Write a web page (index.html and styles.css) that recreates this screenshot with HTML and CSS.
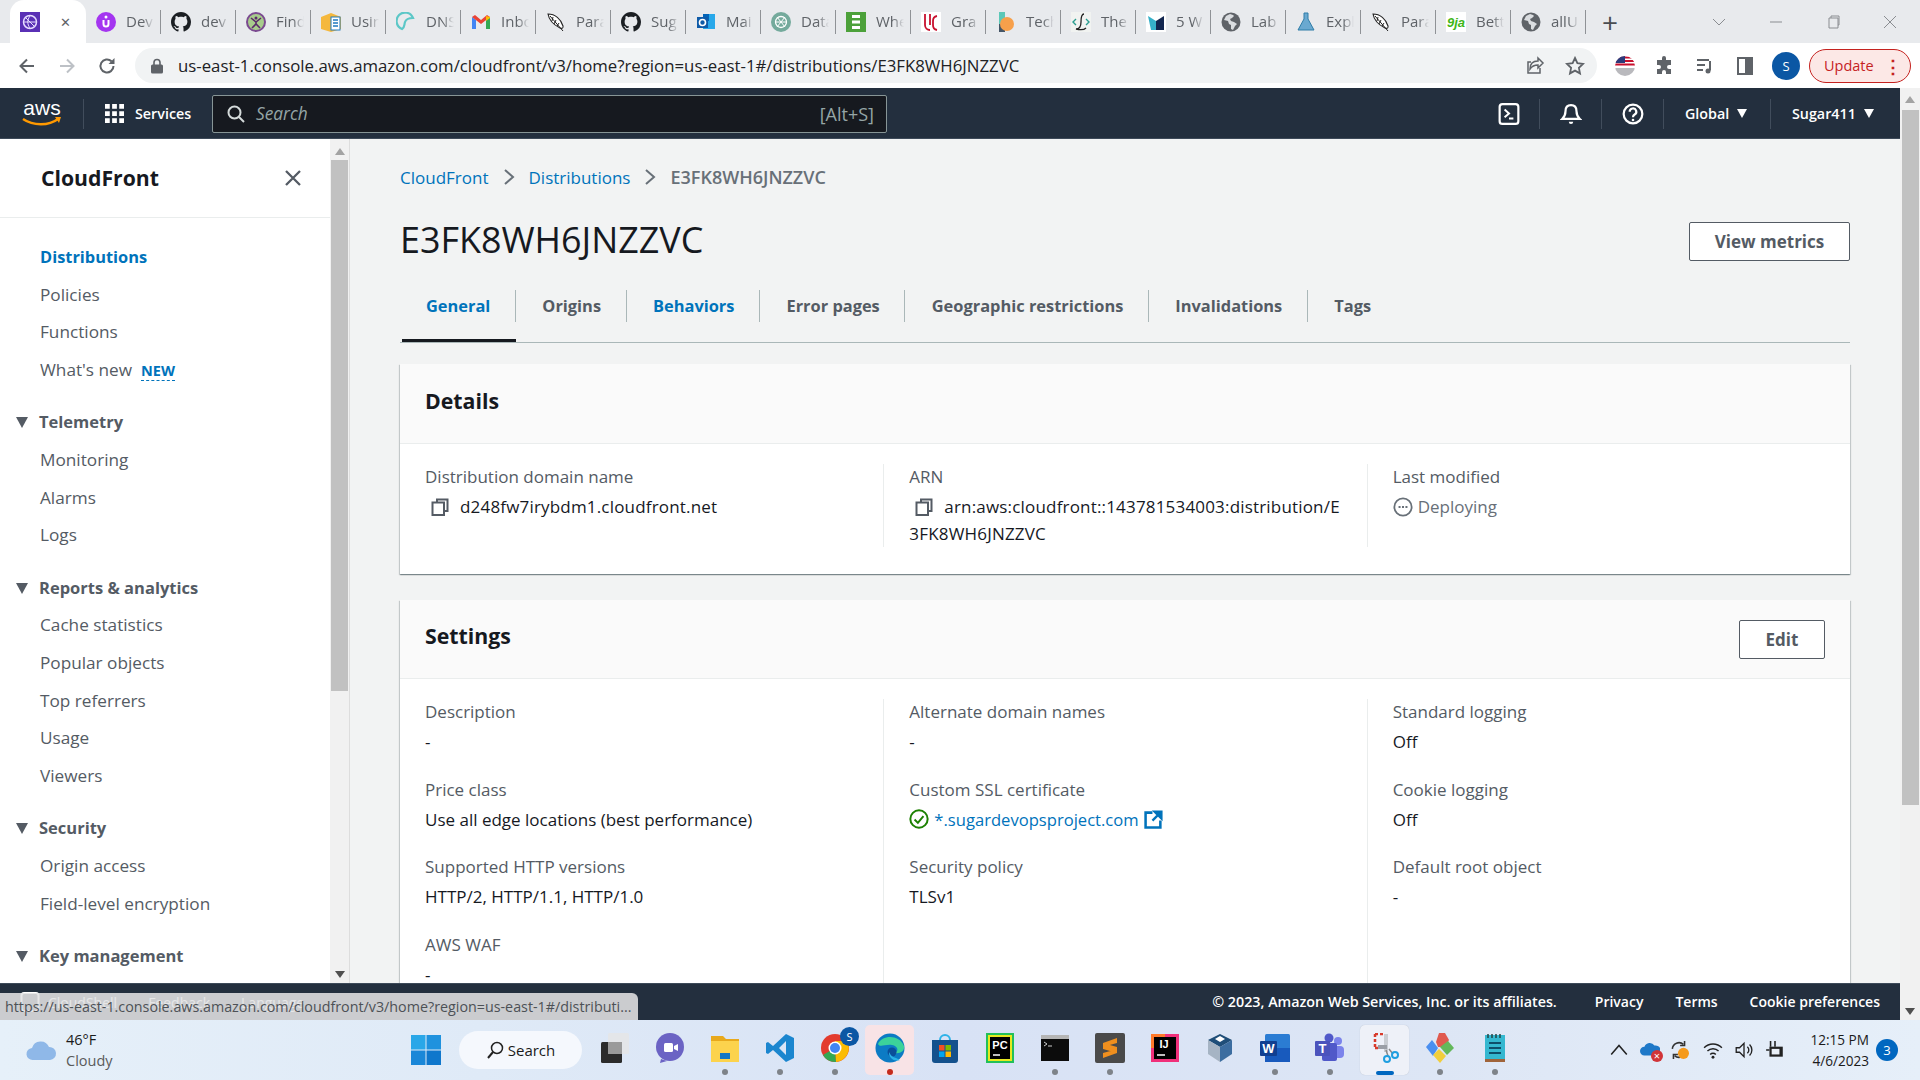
FILE: index.html
```html
<!DOCTYPE html>
<html lang="en">
<head>
<meta charset="utf-8">
<title>CloudFront</title>
<link rel="stylesheet" href="styles.css">
</head>
<body>
<svg class="defs" width="0" height="0" aria-hidden="true">
  <symbol id="gh" viewBox="0 0 16 16"><path fill="#1b1f23" d="M8 0C3.6 0 0 3.6 0 8c0 3.5 2.3 6.5 5.5 7.6.4.1.5-.2.5-.4v-1.4c-2.2.5-2.7-1-2.7-1-.4-.9-.9-1.200-.9-1.200-.7-.5.1-.5.1-.5.8.1 1.200.8 1.200.8.7 1.200 1.900.9 2.300.7.1-.5.3-.9.5-1.100-1.800-.2-3.600-.9-3.600-4 0-.9.3-1.600.8-2.100-.1-.2-.4-1 .1-2.100 0 0 .7-.2 2.200.8.6-.2 1.300-.3 2-.3s1.400.1 2 .3c1.500-1 2.200-.8 2.200-.8.4 1.100.2 1.900.1 2.100.5.6.8 1.300.8 2.100 0 3.100-1.900 3.700-3.700 3.900.3.3.6.8.6 1.500v2.200c0 .2.1.5.6.4A8 8 0 0 0 16 8c0-4.400-3.600-8-8-8z"/></symbol>
  <symbol id="globe" viewBox="0 0 20 20"><circle cx="10" cy="10" r="9.500" fill="#5f6368"/><path fill="#e8eaed" d="M9 2 5 4 3 8l4 1 1 3 2 1v4l2 1 2-4 2-2-3-2-3-1-1-2 2-1 2-2-1-1z" opacity=".9"/></symbol>
  <symbol id="feather" viewBox="0 0 20 20"><path fill="#fff" stroke="#222" stroke-width="1.100" d="M2 2c7 0 13 5 15 12 .500 2-1 3-3 2C8 13 3 8 2 2z"/><path stroke="#222" stroke-width="1" d="M4 4l13 15M7 5l-1 4M10 8l-2 4M13 11l-2 3"/></symbol>
</svg>

<div class="tabstrip">
  <div class="tab tab-active">
    <svg class="fav" viewBox="0 0 20 20"><rect width="20" height="20" fill="#5a30b5"/><circle cx="10" cy="10" r="6.500" fill="none" stroke="#e6dcff" stroke-width="1.500"/><path d="M4 10h12M10 4c-3 4-3 8 0 12M6 6l8 8" stroke="#e6dcff" fill="none"/></svg>
    <span class="tab-close">✕</span>
  </div>
  <div class="tab"><svg class="fav" viewBox="0 0 20 20"><circle cx="10" cy="10" r="10" fill="#a435f0"/><path d="M6.500 8v4a3.500 3.500 0 0 0 7 0V8h-2v4a1.500 1.500 0 0 1-3 0V8z" fill="#fff"/><circle cx="10" cy="5" r="1.500" fill="#fff"/></svg><span class="tab-text">Dev</span></div>
  <div class="tab"><svg class="fav"><use href="#gh"/></svg><span class="tab-text">dev</span></div>
  <div class="tab"><svg class="fav" viewBox="0 0 20 20"><circle cx="10" cy="10" r="9" fill="#a8cc8c" stroke="#7b4a90" stroke-width="2"/><path d="M5 6l5 4 5-4M10 10v2M6 16l4-4 4 4" stroke="#5b2a6b" stroke-width="1.600" fill="none"/><circle cx="10" cy="6" r="1.500" fill="#5b2a6b"/></svg><span class="tab-text">Find</span></div>
  <div class="tab"><svg class="fav" viewBox="0 0 20 20"><path fill="#f5b83d" d="M0 5l10-4 10 4v12l-10 3L0 17z"/><rect x="10" y="5" width="9" height="13" fill="#fff" stroke="#1f7ac0"/><path d="M12 8h5M12 11h5M12 14h5" stroke="#1f7ac0" stroke-width="1.300"/></svg><span class="tab-text">Usin</span></div>
  <div class="tab"><svg class="fav" viewBox="0 0 20 20"><path fill="none" stroke="#5cc7c7" stroke-width="2.200" d="M6 17A8.500 8.500 0 1 1 17 6c-4 0-7 1-8 4s0 5-3 7z"/></svg><span class="tab-text">DNS</span></div>
  <div class="tab"><svg class="fav" viewBox="0 0 20 20"><path fill="#4285f4" d="M1 5v12h4V8z"/><path fill="#34a853" d="M15 8v9h4V5z"/><path fill="#ea4335" d="M1 5l9 7 9-7-3-2-6 5-6-5z"/><path fill="#fbbc04" d="M15 4l4 1v1l-4 3z"/></svg><span class="tab-text">Inbo</span></div>
  <div class="tab"><svg class="fav"><use href="#feather"/></svg><span class="tab-text">Para</span></div>
  <div class="tab"><svg class="fav"><use href="#gh"/></svg><span class="tab-text">Sug</span></div>
  <div class="tab"><svg class="fav" viewBox="0 0 20 20"><rect x="7" y="2" width="12" height="15" fill="#28a8ea"/><rect x="7" y="2" width="6" height="7" fill="#0364b8"/><rect x="1" y="5" width="11" height="11" fill="#0f5ba8"/><circle cx="6.500" cy="10.500" r="3" fill="none" stroke="#fff" stroke-width="1.600"/></svg><span class="tab-text">Mai</span></div>
  <div class="tab"><svg class="fav" viewBox="0 0 20 20"><circle cx="10" cy="10" r="10" fill="#74aa9c"/><circle cx="10" cy="10" r="5.500" fill="none" stroke="#fff" stroke-width="1.300"/><path d="M6 5l8 10M14 5L6 15M4.500 10h11" stroke="#fff"/></svg><span class="tab-text">Data</span></div>
  <div class="tab"><svg class="fav" viewBox="0 0 20 20"><rect width="20" height="20" fill="#4ca13a"/><path d="M6 3h8v3H6zM6 8.500h8v3H6zM6 14h8v3H6z" fill="#fff"/></svg><span class="tab-text">Whe</span></div>
  <div class="tab"><svg class="fav" viewBox="0 0 20 20"><rect width="20" height="20" fill="#fff"/><path d="M4 2v11a5 5 0 0 0 5 5M9 2v11M16 4a5 5 0 0 0-4 5v4a5 5 0 0 0 4 5" stroke="#c8102e" stroke-width="1.800" fill="none"/></svg><span class="tab-text">Gra</span></div>
  <div class="tab"><svg class="fav" viewBox="0 0 20 20"><rect x="3" width="6" height="20" fill="#5cc8b8"/><rect x="3" y="12" width="6" height="8" fill="#456"/><circle cx="11" cy="12" r="7" fill="#f7a04b"/></svg><span class="tab-text">Tech</span></div>
  <div class="tab"><svg class="fav" viewBox="0 0 20 20"><rect width="20" height="20" fill="#f1f3f1"/><path d="M13 2c-3 0-3 5-3 8s-1 7-5 7c4 1 8 1 10-1" stroke="#222" stroke-width="1.300" fill="none"/><path d="M5 7l-3 3 3 3M15 7l3 3-3 3" stroke="#2a9d8f" stroke-width="1.400" fill="none"/></svg><span class="tab-text">The</span></div>
  <div class="tab"><svg class="fav" viewBox="0 0 20 20"><rect width="20" height="20" fill="#fff"/><path fill="#35b0c8" d="M2 4l8 5v9H5z"/><path fill="#12264f" d="M18 4l-8 5v9h8z"/></svg><span class="tab-text">5 W</span></div>
  <div class="tab"><svg class="fav"><use href="#globe"/></svg><span class="tab-text">Lab</span></div>
  <div class="tab"><svg class="fav" viewBox="0 0 20 20"><path fill="#6aa9d0" stroke="#2e7da8" d="M8 1h4v6l6 11H2L8 7z"/></svg><span class="tab-text">Expl</span></div>
  <div class="tab"><svg class="fav"><use href="#feather"/></svg><span class="tab-text">Para</span></div>
  <div class="tab"><svg class="fav" viewBox="0 0 20 20"><rect width="20" height="20" fill="#fff"/><text x="10" y="15" text-anchor="middle" class="fav-9ja">9ja</text></svg><span class="tab-text">Bett</span></div>
  <div class="tab"><svg class="fav"><use href="#globe"/></svg><span class="tab-text">allU</span></div>
  <span class="newtab">+</span>
  <div class="win-ctrls">
    <svg class="win" viewBox="0 0 14 14"><path d="M1 4l6 6 6-6" fill="none" stroke="#8a8d91"/></svg>
    <svg class="win" viewBox="0 0 14 14"><path d="M1 7h12" stroke="#8a8d91"/></svg>
    <svg class="win" viewBox="0 0 14 14"><path d="M3 3h9v10H3z M5 3V1h8v9h-1" fill="none" stroke="#8a8d91"/></svg>
    <svg class="win" viewBox="0 0 14 14"><path d="M1 1l12 12M13 1L1 13" stroke="#8a8d91"/></svg>
  </div>
</div>

<div class="toolbar">
  <div class="nav-btns">
    <svg class="tb-icon" viewBox="0 0 20 20"><path d="M17 10H4M10 3.500 3.500 10l6.500 6.500" fill="none" stroke="#5f6368" stroke-width="2"/></svg>
    <svg class="tb-icon" viewBox="0 0 20 20"><path d="M3 10h13M10 3.500l6.500 6.500-6.500 6.500" fill="none" stroke="#bdc1c6" stroke-width="2"/></svg>
    <svg class="tb-icon" viewBox="0 0 20 20"><path d="M16.500 10a6.500 6.500 0 1 1-2-4.700" fill="none" stroke="#5f6368" stroke-width="2"/><path d="M17.500 2v6h-6z" fill="#5f6368"/></svg>
  </div>
  <div class="omnibox">
    <svg class="lock" viewBox="0 0 12 16"><path d="M3 7V4.500a3 3 0 0 1 6 0V7" fill="none" stroke="#5f6368" stroke-width="1.600"/><rect y="6.500" width="12" height="9" rx="1.500" fill="#5f6368"/></svg>
    <span class="url">us-east-1.console.aws.amazon.com/cloudfront/v3/home?region=us-east-1#/distributions/E3FK8WH6JNZZVC</span>
    <svg class="omni-icon" viewBox="0 0 20 20"><path d="M13 2l5 5-5 5V9c-4 0-6 1-8 4 0-5 3-8 8-8z M15 12v5H3V6h3" fill="none" stroke="#5f6368" stroke-width="1.500"/></svg>
    <svg class="omni-icon" viewBox="0 0 20 20"><path d="M10 2l2.400 5.200 5.600.700-4.100 3.900 1.100 5.600L10 14.600l-5 2.800 1.100-5.600L2 7.900l5.600-.7z" fill="none" stroke="#5f6368" stroke-width="1.800"/></svg>
  </div>
  <div class="tb-right">
    <svg class="ext" viewBox="0 0 20 20"><clipPath id="flagc"><circle cx="10" cy="10" r="10"/></clipPath><g clip-path="url(#flagc)"><rect width="20" height="20" fill="#fff"/><path d="M0 1.500h20M0 5h20M0 8.500h20" stroke="#c8102e" stroke-width="1.800"/><rect width="10" height="7" fill="#2b3a7a"/><rect y="12" width="20" height="8" fill="#b9b9bd"/></g></svg>
    <svg class="ext" viewBox="0 0 20 20"><path fill="#5f6368" d="M7 2a2 2 0 0 1 4 0v2h5v5h-2a2 2 0 0 0 0 4h2v5h-5v-2a2 2 0 0 0-4 0v2H2v-5h2a2 2 0 0 0 0-4H2V4h5z"/></svg>
    <svg class="ext" viewBox="0 0 20 20"><path d="M2 4h12M2 9h8M2 14h6" stroke="#5f6368" stroke-width="2"/><path d="M15 5v9.500" stroke="#5f6368" stroke-width="2"/><circle cx="13" cy="15" r="2.500" fill="#5f6368"/></svg>
    <svg class="ext" viewBox="0 0 20 20"><rect x="3" y="2" width="14" height="16" fill="none" stroke="#5f6368" stroke-width="2"/><rect x="10" y="2" width="7" height="16" fill="#5f6368"/></svg>
    <span class="avatar">S</span>
    <span class="update">Update<span class="update-dots">⋮</span></span>
  </div>
</div>

<div class="window">
  <div class="console">
    <header class="awsnav">
      <svg class="aws-logo" viewBox="0 0 40 30"><text x="20" y="16" text-anchor="middle" class="aws-text">aws</text><path d="M1 20c10 7 26 7 35 0" fill="none" stroke="#f90" stroke-width="2.300"/><path d="M33 18l6 0-2 6z" fill="#f90"/></svg>
      <span class="awsnav-sep sep-logo"></span>
      <svg class="grid-ic" viewBox="0 0 20 20"><path fill="#fff" d="M0 0h5v5H0zM7.500 0h5v5h-5zM15 0h5v5h-5zM0 7.500h5v5H0zM7.500 7.500h5v5h-5zM15 7.500h5v5h-5zM0 15h5v5H0zM7.500 15h5v5h-5zM15 15h5v5h-5z"/></svg>
      <span class="services">Services</span>
      <div class="searchbox">
        <svg class="search-ic" viewBox="0 0 18 18"><circle cx="7.500" cy="7.500" r="6" fill="none" stroke="#d5dbdb" stroke-width="2"/><path d="M12 12l5 5" stroke="#d5dbdb" stroke-width="2"/></svg>
        <span class="search-ph">Search</span>
        <span class="search-key">[Alt+S]</span>
      </div>
      <div class="nav-right">
        <div class="nav-item"><svg class="nav-ic" viewBox="0 0 20 20"><rect x="1.500" y="1" width="17" height="18" rx="2.500" fill="none" stroke="#fff" stroke-width="2"/><path d="M6 6l4 3.500L6 13M10 14h4" fill="none" stroke="#fff" stroke-width="1.800"/></svg></div>
        <div class="nav-item"><svg class="nav-ic" viewBox="0 0 20 20"><path d="M10 2c-3.500 0-5 2.500-5 5.500 0 4-1.500 5.500-3 7h16c-1.500-1.500-3-3-3-7C15 4.500 13.500 2 10 2z" fill="none" stroke="#fff" stroke-width="2"/><path d="M8 17a2 2 0 0 0 4 0z" fill="#fff"/></svg></div>
        <div class="nav-item"><svg class="nav-ic" viewBox="0 0 20 20"><circle cx="10" cy="10" r="8.500" fill="none" stroke="#fff" stroke-width="2"/><path d="M7 8a3 3 0 1 1 4.500 2.500c-1 .6-1.500 1-1.500 2.500" fill="none" stroke="#fff" stroke-width="2"/><circle cx="10" cy="15.500" r="1.200" fill="#fff"/></svg></div>
        <div class="nav-item nav-menu nav-global">Global<span class="tri"></span></div>
        <div class="nav-item nav-menu nav-user">Sugar411<span class="tri"></span></div>
      </div>
    </header>

    <div class="console-body">
      <aside class="sidenav">
        <div class="side-head"><span class="side-title">CloudFront</span>
          <svg class="side-close" viewBox="0 0 18 18"><path d="M2 2l14 14M16 2L2 16" stroke="#545b64" stroke-width="2.300"/></svg>
        </div>
        <nav class="side-list">
          <a class="side-link side-current">Distributions</a>
          <a class="side-link">Policies</a>
          <a class="side-link">Functions</a>
          <a class="side-link">What's new<span class="new-tag">NEW</span></a>
          <div class="side-group">Telemetry</div>
          <a class="side-link">Monitoring</a>
          <a class="side-link">Alarms</a>
          <a class="side-link">Logs</a>
          <div class="side-group">Reports &amp; analytics</div>
          <a class="side-link">Cache statistics</a>
          <a class="side-link">Popular objects</a>
          <a class="side-link">Top referrers</a>
          <a class="side-link">Usage</a>
          <a class="side-link">Viewers</a>
          <div class="side-group">Security</div>
          <a class="side-link">Origin access</a>
          <a class="side-link">Field-level encryption</a>
          <div class="side-group">Key management</div>
        </nav>
      </aside>
      <div class="side-scroll">
        <span class="sb-arrow sb-up"></span>
        <span class="side-thumb"></span>
        <span class="sb-arrow sb-down sb-end"></span>
      </div>

      <main class="content">
        <div class="crumbs">
          <a class="link">CloudFront</a>
          <svg class="crumb-sep" viewBox="0 0 12 18"><path d="M2 2l8 7-8 7" fill="none" stroke="#687078" stroke-width="2"/></svg>
          <a class="link">Distributions</a>
          <svg class="crumb-sep" viewBox="0 0 12 18"><path d="M2 2l8 7-8 7" fill="none" stroke="#687078" stroke-width="2"/></svg>
          <span class="crumb-current">E3FK8WH6JNZZVC</span>
        </div>
        <div class="title-row">
          <h1 class="page-title">E3FK8WH6JNZZVC</h1>
          <button class="btn btn-metrics">View metrics</button>
        </div>
        <div class="tabs">
          <span class="ctab ctab-active">General</span>
          <span class="ctab">Origins</span>
          <span class="ctab ctab-blue">Behaviors</span>
          <span class="ctab">Error pages</span>
          <span class="ctab">Geographic restrictions</span>
          <span class="ctab">Invalidations</span>
          <span class="ctab ctab-last">Tags</span>
        </div>

        <section class="card">
          <div class="card-head"><h2 class="card-title">Details</h2></div>
          <div class="card-body card-body-details">
            <div class="col">
              <div class="kv"><div class="k">Distribution domain name</div>
                <div class="v v-copy"><svg class="copy" viewBox="0 0 18 18"><path d="M6 4V1.500h10.500V13H14M1.500 4.500H13V17H1.500z" fill="none" stroke="#545b64" stroke-width="2"/></svg>d248fw7irybdm1.cloudfront.net</div></div>
            </div>
            <div class="col">
              <div class="kv"><div class="k">ARN</div>
                <div class="v v-copy v-arn"><svg class="copy" viewBox="0 0 18 18"><path d="M6 4V1.500h10.500V13H14M1.500 4.500H13V17H1.500z" fill="none" stroke="#545b64" stroke-width="2"/></svg><span class="arn-a">arn:aws:cloudfront::143781534003:distribution/E</span><wbr><span class="arn-b">3FK8WH6JNZZVC</span></div></div>
            </div>
            <div class="col">
              <div class="kv"><div class="k">Last modified</div>
                <div class="v v-status"><svg class="status-ic" viewBox="0 0 18 18"><circle cx="9" cy="9" r="7.800" fill="none" stroke="#687078" stroke-width="1.600"/><path d="M5 9h1.800M8.100 9h1.800M11.200 9H13" stroke="#687078" stroke-width="1.600"/></svg>Deploying</div></div>
            </div>
          </div>
        </section>

        <section class="card card-settings">
          <div class="card-head card-head-row"><h2 class="card-title">Settings</h2><button class="btn btn-edit">Edit</button></div>
          <div class="card-body card-body-settings">
            <div class="col">
              <div class="kv"><div class="k">Description</div><div class="v">-</div></div>
              <div class="kv"><div class="k">Price class</div><div class="v">Use all edge locations (best performance)</div></div>
              <div class="kv"><div class="k">Supported HTTP versions</div><div class="v">HTTP/2, HTTP/1.1, HTTP/1.0</div></div>
              <div class="kv"><div class="k">AWS WAF</div><div class="v">-</div></div>
            </div>
            <div class="col">
              <div class="kv"><div class="k">Alternate domain names</div><div class="v">-</div></div>
              <div class="kv"><div class="k">Custom SSL certificate</div>
                <div class="v v-ssl"><svg class="ok-ic" viewBox="0 0 18 18"><circle cx="9" cy="9" r="7.800" fill="none" stroke="#1d8102" stroke-width="1.800"/><path d="M5 9.500l3 3 5-6" fill="none" stroke="#1d8102" stroke-width="1.800"/></svg><a class="link ssl-link">*.sugardevopsproject.com</a><svg class="ext-ic" viewBox="0 0 18 18"><path d="M8 2.500H1.500v14h14V10" fill="none" stroke="#0073bb" stroke-width="2.400"/><path d="M10 1.500h6.500V8zM15 3L8 10" fill="#0073bb" stroke="#0073bb" stroke-width="2.200"/></svg></div></div>
              <div class="kv"><div class="k">Security policy</div><div class="v">TLSv1</div></div>
            </div>
            <div class="col">
              <div class="kv"><div class="k">Standard logging</div><div class="v">Off</div></div>
              <div class="kv"><div class="k">Cookie logging</div><div class="v">Off</div></div>
              <div class="kv"><div class="k">Default root object</div><div class="v">-</div></div>
            </div>
          </div>
        </section>
      </main>
    </div>

    <footer class="awsfoot">
      <div class="foot-left"><svg class="foot-ic" viewBox="0 0 20 20"><rect x="1.500" y="1" width="17" height="18" rx="2.500" fill="none" stroke="#fff" stroke-width="2"/></svg><span>CloudShell</span><span>Feedback</span><span>Language</span></div>
      <div class="foot-right"><span class="foot-copy">© 2023, Amazon Web Services, Inc. or its affiliates.</span><span>Privacy</span><span>Terms</span><span>Cookie preferences</span></div>
    </footer>
  </div>
  <div class="page-scroll">
    <span class="sb-arrow sb-up"></span>
    <span class="page-thumb"></span>
    <span class="sb-arrow sb-down sb-end"></span>
  </div>
  <div class="status-bubble">https://us-east-1.console.aws.amazon.com/cloudfront/v3/home?region=us-east-1#/distributi...</div>
</div>

<div class="taskbar">
  <div class="weather">
    <svg class="weather-ic" viewBox="0 0 32 24"><path d="M8 22a6 6 0 0 1-1-12 9 9 0 0 1 17-1 6.500 6.500 0 0 1 1 13z" fill="#8fb8e8"/></svg>
    <div class="weather-text"><span>46°F</span><span class="weather-sub">Cloudy</span></div>
  </div>
  <div class="win-logo"><svg class="tk" viewBox="0 0 30 30"><path fill="#29a7e8" d="M0 0h14.500v14.500H0z"/><path fill="#1f92de" d="M15.500 0H30v14.500H15.500z"/><path fill="#1a87d8" d="M0 15.500h14.500V30H0z"/><path fill="#0f77cc" d="M15.500 15.500H30V30H15.500z"/></svg></div>
  <div class="tk-search"><svg class="tk-search-ic" viewBox="0 0 18 18"><circle cx="11" cy="7" r="5.500" fill="none" stroke="#222" stroke-width="1.500"/><path d="M7 11l-5 6" stroke="#222" stroke-width="2"/></svg>Search</div>
  <div class="tk-apps">
    <div class="tk-slot"><svg class="tk" viewBox="0 0 30 30"><rect x="1" y="9" width="21" height="21" rx="1.500" fill="#2b2b2b"/><rect x="8" y="0" width="21" height="21" rx="1.500" fill="#e4e6e8" opacity=".95"/><rect x="8" y="9" width="14" height="12" fill="#9a9a9a"/></svg></div>
    <div class="tk-slot"><svg class="tk" viewBox="0 0 30 30"><circle cx="15" cy="14" r="14" fill="#6b63c4"/><path d="M6 26l-1 4 7-2z" fill="#6b63c4"/><rect x="9" y="10" width="9" height="9" rx="1.500" fill="#fff"/><path d="M19 13l4-2v7l-4-2z" fill="#fff"/></svg></div>
    <div class="tk-slot tk-on"><svg class="tk" viewBox="0 0 30 30"><path d="M1 3h12l3 3h13v22H1z" fill="#e8a91c"/><rect x="1" y="8" width="28" height="21" fill="#fcd34d"/><rect x="10" y="20" width="10" height="6" fill="#1277c4"/></svg></div>
    <div class="tk-slot tk-on"><svg class="tk" viewBox="0 0 30 30"><path d="M21 1l8 4v20l-8 4-13-12-5 4-2-1V10l2-1 5 4zM21 8l-7 7 7 7z" fill="#1b86cf" fill-rule="evenodd"/></svg></div>
    <div class="tk-slot tk-on"><svg class="tk" viewBox="0 0 30 30"><circle cx="15" cy="15" r="14" fill="#e33b2e"/><path d="M15 15L3 22a14 14 0 0 0 13 7z" fill="#34a853"/><path d="M15 8h12a14 14 0 0 1-11 21z" fill="#fbbc04"/><circle cx="15" cy="15" r="6.500" fill="#fff"/><circle cx="15" cy="15" r="5" fill="#4285f4"/></svg><span class="chrome-badge">S</span></div>
    <div class="tk-slot tk-on tk-active-edge"><svg class="tk" viewBox="0 0 30 30"><circle cx="15" cy="15" r="14.500" fill="#0c7bc4"/><path d="M3 11C7 2 24 1 29 13c1 5-4 8-9 7 4-2 3-7-3-8C10 11 5 15 3 11z" fill="#3cd29a"/><circle cx="17" cy="19" r="4.500" fill="#0a4f9a"/><path d="M21 25a10 10 0 0 1-7-6c-.5 6 5 10 11 8z" fill="#29b3e8"/></svg></div>
    <div class="tk-slot"><svg class="tk" viewBox="0 0 30 30"><path d="M10 7a5 5 0 0 1 10 0" fill="none" stroke="#2eb3e8" stroke-width="2"/><path d="M2 7h26v20a3 3 0 0 1-3 3H5a3 3 0 0 1-3-3z" fill="#14518d"/><path fill="#f25022" d="M9 12h5.500v5.500H9z"/><path fill="#7fba00" d="M15.500 12H21v5.500h-5.500z"/><path fill="#00a4ef" d="M9 18.500h5.500V24H9z"/><path fill="#ffb900" d="M15.500 18.500H21V24h-5.500z"/></svg></div>
    <div class="tk-slot"><svg class="tk" viewBox="0 0 30 30"><rect x="2" y="1" width="26" height="28" fill="#e8e820" stroke="#22c05a" stroke-width="2"/><rect x="5" y="4" width="20" height="22" fill="#000"/><text x="15" y="16" text-anchor="middle" class="tk-txt">PC</text><path d="M8 22h7" stroke="#fff" stroke-width="1.500"/></svg></div>
    <div class="tk-slot tk-on"><svg class="tk" viewBox="0 0 30 30"><rect x="1" y="2" width="28" height="26" fill="#0c0c0c"/><rect x="1" y="2" width="28" height="4" fill="#b5b5b5"/><path d="M4 9l3 2-3 2M8 13h4" stroke="#ccc" fill="none"/></svg></div>
    <div class="tk-slot tk-on"><svg class="tk" viewBox="0 0 30 30"><rect width="30" height="30" rx="2" fill="#4a4a4a"/><path d="M22 5 8 10v6l14 4v-5l-9-2.500L22 10zM8 25l14-5v-6L8 10v5l9 2.500L8 20z" fill="#f08f1e"/></svg></div>
    <div class="tk-slot"><svg class="tk" viewBox="0 0 30 30"><rect x="1" y="1" width="28" height="28" fill="#f0307a"/><rect x="1" y="1" width="14" height="14" fill="#ff7a2b"/><rect x="4" y="4" width="22" height="22" fill="#000"/><text x="14" y="15" text-anchor="middle" class="tk-txt">IJ</text><path d="M7 22h8" stroke="#fff" stroke-width="1.500"/></svg></div>
    <div class="tk-slot"><svg class="tk" viewBox="0 0 30 30"><path d="M15 1l12 6v14l-12 8-12-8V7z" fill="#d8dee8"/><path d="M15 1l12 6-12 7L3 7z" fill="#1f4e79"/><path d="M3 7l12 7v15L3 21z" fill="#a6b4c4"/><path d="M15 14l12-7v14l-12 8z" fill="#3c6da0"/><path d="M10 6l5 3 5-3-5-3z" fill="#fff"/></svg></div>
    <div class="tk-slot tk-on"><svg class="tk" viewBox="0 0 30 30"><rect x="5" y="1" width="25" height="28" rx="1.500" fill="#2b7cd3"/><rect x="5" y="15" width="25" height="14" fill="#185abd"/><rect y="8" width="17" height="15" rx="1" fill="#103f91"/><text x="8.500" y="20" text-anchor="middle" class="tk-txt tk-txt-w">W</text></svg></div>
    <div class="tk-slot tk-on"><svg class="tk" viewBox="0 0 30 30"><circle cx="23" cy="8" r="4" fill="#7b83eb"/><circle cx="14" cy="5" r="4.500" fill="#5059c9"/><rect x="18" y="13" width="11" height="12" rx="4" fill="#7b83eb"/><rect x="7" y="10" width="15" height="18" rx="2" fill="#5059c9"/><rect y="8" width="15" height="15" rx="1" fill="#4b53bc"/><text x="7.500" y="20" text-anchor="middle" class="tk-txt tk-txt-w">T</text></svg></div>
    <div class="tk-slot tk-on tk-active-snip"><svg class="tk" viewBox="0 0 30 30"><path d="M5 1h10M5 1v14M5 15h3" stroke="#d83b2b" stroke-width="2.500" stroke-dasharray="3 2" fill="none"/><rect x="14" y="1" width="4" height="18" fill="#c9cdd2"/><rect x="8" y="12" width="9" height="4" fill="#9b9fa6"/><path d="M16 17l2 6M19 16l4 5" stroke="#888" stroke-width="1.500"/><circle cx="17" cy="26" r="3" fill="none" stroke="#1f9fe0" stroke-width="2"/><circle cx="25" cy="22" r="3" fill="none" stroke="#1f9fe0" stroke-width="2"/></svg></div>
    <div class="tk-slot tk-on"><svg class="tk" viewBox="0 0 30 30"><path d="M14 0h6l4 7-4 7h-7l-2-5z" fill="#e05a4f"/><path d="M1 14l6-7 6 8-5 8z" fill="#4a8ff0"/><path d="M15 14l8-6 6 7-7 7z" fill="#63b85a"/><path d="M8 22l6-6 7 7-6 7z" fill="#f1ce3c"/></svg></div>
    <div class="tk-slot tk-on"><svg class="tk" viewBox="0 0 30 30"><rect x="5" y="2" width="20" height="26" fill="#35b8d0"/><rect x="5" y="26" width="20" height="3" fill="#a0643a"/><path d="M8 1v4M12 1v4M16 1v4M20 1v4" stroke="#244" stroke-width="1.500"/><path d="M9 10h12M9 15h12M9 20h12" stroke="#0f4f6a" stroke-width="2"/></svg></div>
  </div>
  <div class="tray">
    <svg class="tr" viewBox="0 0 18 18"><path d="M2 13l7-8 7 8" fill="none" stroke="#222" stroke-width="1.400"/></svg>
    <span class="tr-wrap"><svg class="tr tr-drive" viewBox="0 0 18 18"><path d="M4 14a4 4 0 0 1 0-8 5 5 0 0 1 9-1 4 4 0 0 1 2 9z" fill="#1e78c8"/></svg><span class="tr-err">×</span></span>
    <svg class="tr tr-sync" viewBox="0 0 18 18"><path d="M3 8a6 6 0 0 1 10-4M15 10a6 6 0 0 1-10 4" fill="none" stroke="#333" stroke-width="1.400"/><path d="M14 1v4h-4M4 17v-4h4" fill="none" stroke="#333" stroke-width="1.400"/><circle cx="13" cy="12" r="5" fill="#f59a1c"/></svg>
    <svg class="tr" viewBox="0 0 18 18"><path d="M1 7a11 11 0 0 1 16 0M4 10a7 7 0 0 1 10 0M6.500 13a3.500 3.500 0 0 1 5 0" fill="none" stroke="#222" stroke-width="1.300"/><circle cx="9" cy="15.500" r="1.300" fill="#222"/></svg>
    <svg class="tr" viewBox="0 0 18 18"><path d="M2 7h3l4-4v12l-4-4H2z" fill="none" stroke="#222" stroke-width="1.200"/><path d="M12 6a4 4 0 0 1 0 6M14 4a7 7 0 0 1 0 10" fill="none" stroke="#222" stroke-width="1.200"/></svg>
    <svg class="tr" viewBox="0 0 18 18"><rect x="4" y="6" width="12" height="9" fill="#222"/><path d="M5 1v5M9 1v5M1 9h3" stroke="#222" stroke-width="1.400"/><rect x="6" y="8" width="7" height="5" fill="#e8eef6"/></svg>
    <div class="clock"><span>12:15 PM</span><span>4/6/2023</span></div>
    <span class="notif">3</span>
  </div>
</div>
</body>
</html>
```
FILE: styles.css
```css
* { box-sizing: border-box; }
html, body { margin: 0; padding: 0; }
body {
  width: 1920px; height: 1080px; overflow: hidden;
  display: flex; flex-direction: column;
  font-family: "Open Sans", "Liberation Sans", sans-serif;
  background: #fff;
}
.defs { position: absolute; }
h1, h2 { margin: 0; font-weight: 400; }
button { font-family: inherit; }

/* tab strip */
.tabstrip { height: 43px; background: #e8eaed; display: flex; align-items: center; padding-left: 10px; flex: none; }
.tab { width: 75px; height: 43px; display: flex; align-items: center; padding-left: 10px; position: relative; flex: none; overflow: hidden; }
.tab::after { content: ""; position: absolute; right: 0; top: 10px; height: 24px; width: 1px; background: #8f9296; }
.tab-active { background: #fff; border-radius: 14px 14px 0 0; width: 76px; }
.tab-active::after { display: none; }
.fav { width: 20px; height: 20px; flex: none; }
.tab-text { font-size: 15px; line-height: 20px; margin-top: -2px; color: #5f6368; margin-left: 10px; width: 28px; overflow: hidden; white-space: nowrap; -webkit-mask-image: linear-gradient(90deg, #000 60%, transparent); mask-image: linear-gradient(90deg, #000 60%, transparent); }
.tab-close { margin-left: 20px; font-size: 13px; color: #5f6368; }
.fav-9ja { font: italic 700 13px "Liberation Sans", sans-serif; fill: #3fb618; }
.newtab { font-size: 28px; color: #4a4d51; margin-left: 16px; font-weight: 400; line-height: 1; }
.win-ctrls { margin-left: auto; display: flex; gap: 43px; padding-right: 23px; }
.win { width: 14px; height: 14px; }

/* toolbar */
.toolbar { height: 45px; background: #fff; display: flex; align-items: center; flex: none; padding-left: 17px; }
.nav-btns { display: flex; gap: 20px; width: 118px; flex: none; }
.tb-icon { width: 20px; height: 20px; }
.omnibox { width: 1462px; height: 35px; border-radius: 18px; background: #f1f3f4; display: flex; align-items: center; padding: 0 12px 0 16px; flex: none; }
.lock { width: 12px; height: 16px; flex: none; margin-right: 15px; }
.url { font-size: 16.800px; color: #202124; white-space: nowrap; flex: 1; }
.omni-icon { width: 20px; height: 20px; margin-left: 20px; flex: none; }
.tb-right { display: flex; align-items: center; margin-left: 18px; }
.ext { width: 20px; height: 20px; margin-right: 20px; flex: none; }
.avatar { width: 28px; height: 28px; border-radius: 50%; background: #0b57a4; color: #fff; font-size: 13px; display: flex; align-items: center; justify-content: center; margin-right: 9px; margin-left: -3px; flex: none; }
.update { width: 102px; height: 34px; border: 1px solid #c5221f; border-radius: 17px; background: #fce8e6; color: #c5221f; font-size: 14.500px; display: flex; align-items: center; padding-left: 14px; justify-content: space-between; padding-right: 8px; flex: none; }
.update-dots { font-weight: 700; font-size: 18px; }

/* window */
.window { height: 932px; display: flex; position: relative; flex: none; }
.console { width: 1900px; display: flex; flex-direction: column; flex: none; min-height: 0; }
.page-scroll { width: 20px; background: #f1f1f1; display: flex; flex-direction: column; align-items: center; flex: none; padding-top: 8px; }
.page-thumb { width: 17px; height: 695px; background: #c1c1c1; margin-top: 7px; }
.sb-arrow { width: 0; height: 0; border-left: 5px solid transparent; border-right: 5px solid transparent; flex: none; }
.sb-up { border-bottom: 7px solid #a3a3a3; }
.sb-down { border-top: 7px solid #505050; }
.sb-end { margin-top: auto; margin-bottom: 5px; }

/* aws nav */
.awsnav { height: 51px; background: #232f3e; display: flex; align-items: center; flex: none; color: #fff; border-bottom: 1px solid #3d4a59; padding-top: 1px; }
.aws-logo { width: 40px; height: 30px; margin-left: 22px; flex: none; }
.aws-text { font: 400 21px "Liberation Sans", sans-serif; fill: #fff; }
.awsnav-sep { width: 1px; height: 30px; background: #414d5c; flex: none; }
.sep-logo { margin-left: 21px; }
.grid-ic { width: 19px; height: 19px; margin-left: 21px; flex: none; }
.services { font-size: 14.300px; font-weight: 600; margin-left: 11px; width: 77px; flex: none; }
.searchbox { width: 675px; height: 38px; background: #16191f; border: 1px solid #879596; border-radius: 2px; display: flex; align-items: center; padding: 0 12px 0 14px; flex: none; }
.search-ic { width: 18px; height: 18px; flex: none; }
.search-ph { font-size: 17.300px; font-style: italic; color: #95a5a6; margin-left: 11px; }
.search-key { margin-left: auto; font-size: 18px; color: #95a5a6; }
.nav-right { margin-left: auto; display: flex; align-items: center; height: 30px; padding-right: 14px; }
.nav-item { height: 30px; width: 62px; display: flex; align-items: center; justify-content: center; border-right: 1px solid #414d5c; font-size: 14.300px; font-weight: 600; flex: none; }
.nav-menu { gap: 8px; justify-content: flex-start; padding-left: 21px; }
.nav-global { width: 107px; }
.nav-user { border-right: 0; width: 115px; }
.nav-ic { width: 22px; height: 22px; }
.tri { width: 0; height: 0; border-left: 5.500px solid transparent; border-right: 5.500px solid transparent; border-top: 9px solid #fff; }

/* console body */
.console-body { flex: 1; display: flex; min-height: 0; overflow: hidden; background: #f2f3f3; }
.sidenav { width: 330px; background: #fff; flex: none; overflow: hidden; color: #545b64; }
.side-head { height: 79px; border-bottom: 1px solid #eaeded; display: flex; align-items: center; justify-content: space-between; padding: 0 28px 0 41px; }
.side-title { font-size: 21.200px; font-weight: 700; color: #16191f; margin-top: -2px; }
.side-close { width: 18px; height: 18px; flex: none; }
.side-list { padding: 20px 0 0 40px; display: flex; flex-direction: column; }
.side-link { font-size: 17.200px; line-height: 37.600px; height: 37.600px; white-space: nowrap; flex: none; }
.side-current { color: #0073bb; font-weight: 700; font-size: 16.400px; }
.new-tag { color: #0073bb; font-size: 14.500px; font-weight: 700; margin-left: 9px; border-bottom: 1px dashed #0073bb; }
.side-group { position: relative; font-size: 16.500px; font-weight: 700; line-height: 37.600px; height: 37.600px; margin-top: 15px; margin-left: -1px; white-space: nowrap; flex: none; }
.side-group::before { content: ""; position: absolute; left: -23px; top: 14px; border-left: 6.500px solid transparent; border-right: 6.500px solid transparent; border-top: 11px solid #545b64; }
.side-scroll { width: 20px; background: #f1f1f1; border-right: 1px solid #ddd; display: flex; flex-direction: column; align-items: center; padding-top: 9px; flex: none; }
.side-thumb { width: 17px; height: 531px; background: #c1c1c1; margin-top: 5px; }

/* main */
.content { flex: 1; min-width: 0; padding: 0 50px; overflow: hidden; }
.crumbs { display: flex; align-items: center; height: 24px; margin-top: 26px; font-size: 17px; }
.link { color: #0073bb; }
.crumb-sep { width: 12px; height: 18px; margin: 0 14px; flex: none; }
.crumb-current { color: #687078; font-weight: 600; font-size: 18px; }
.title-row { display: flex; justify-content: space-between; align-items: flex-start; margin-top: 28px; }
.page-title { font-size: 35.900px; line-height: 46px; color: #16191f; }
.btn { background: #fff; border: 1px solid #545b64; border-radius: 2px; color: #545b64; font-size: 17px; font-weight: 700; }
.btn-metrics { width: 161px; height: 39px; margin-top: 5px; }
.btn-edit { width: 86px; height: 39px; }
.tabs { display: flex; height: 58px; margin-top: 22px; border-bottom: 1px solid #aab7b8; align-items: flex-start; padding-top: 5px; }
.ctab { font-size: 16.400px; font-weight: 700; color: #545b64; padding: 0 24.500px 0 26.500px; height: 32px; line-height: 32px; border-right: 1px solid #aab7b8; white-space: nowrap; position: relative; flex: none; }
.ctab-last { border-right: 0; }
.ctab-blue, .ctab-active { color: #0073bb; }
.ctab-active::after { content: ""; position: absolute; left: 1px; right: -1px; bottom: -20px; height: 3px; background: #16191f; }
.tabs .ctab:first-child { margin-left: 1px; padding-left: 25px; }

.card { background: #fff; box-shadow: 0 1px 1px 0 rgba(0, 28, 36, .3), 1px 1px 1px 0 rgba(0, 28, 36, .15), -1px 1px 1px 0 rgba(0, 28, 36, .15); margin-top: 21px; }
.card-settings { margin-top: 26px; }
.card-head { height: 80px; background: #fafafa; border-bottom: 1px solid #eaeded; display: flex; align-items: center; padding: 0 25px; }
.card-head-row { justify-content: space-between; height: 79px; }
.card-title { font-size: 21.300px; font-weight: 700; color: #16191f; margin-top: -7px; }
.card-body { display: grid; grid-template-columns: repeat(3, 1fr); }
.card-body-details { padding: 20px 0 27px; }
.card-body-settings { padding: 20px 0 0; height: 400px; }
.col { padding: 0 25px; }
.col + .col { border-left: 1px solid #eaeded; }
.kv { height: 77.700px; }
.card-body-details .kv { height: auto; }
.k { font-size: 17px; line-height: 26px; color: #545b64; }
.v { font-size: 17px; line-height: 27px; color: #16191f; margin-top: 3px; }
.v-copy { letter-spacing: .18px; }
.arn-a, .arn-b { white-space: nowrap; }
.copy { width: 18px; height: 18px; margin: 0 11px 0 6px; vertical-align: -3px; }
.v-status { color: #687078; display: flex; align-items: center; }
.status-ic { width: 20px; height: 20px; margin-right: 5px; flex: none; }
.v-ssl { display: flex; align-items: center; }
.ssl-link { font-size: 16.600px; }
.ok-ic { width: 20px; height: 20px; margin-right: 5px; flex: none; }
.ext-ic { width: 19px; height: 19px; margin-left: 5px; flex: none; }

/* footer */
.awsfoot { height: 37px; background: #232f3e; flex: none; color: #fff; display: flex; align-items: flex-start; justify-content: space-between; font-size: 14px; font-weight: 600; padding: 8px 20px 0 20px; border-top: 1px solid #3d4a59; }
.foot-left { display: flex; gap: 31px; font-weight: 400; align-items: center; }
.foot-ic { width: 20px; height: 20px; margin-right: -23px; }
.foot-right { display: flex; gap: 32px; }
.foot-copy { margin-right: 6px; font-size: 14.300px; }

.status-bubble { position: absolute; left: 0; bottom: 0; width: 638px; height: 27px; background: rgba(226, 227, 228, .88); border-top-right-radius: 6px; font-size: 14.300px; line-height: 27px; padding-left: 5px; color: #4d5156; white-space: nowrap; overflow: hidden; }

/* taskbar */
.taskbar { height: 60px; flex: none; display: flex; align-items: center; background: linear-gradient(90deg, #e6f0f9 0%, #dfeaf7 25%, #d8e2f5 50%, #dde6f5 75%, #e6eff9 100%); }
.weather { width: 398px; display: flex; align-items: center; padding-left: 25px; flex: none; }
.weather-ic { width: 32px; height: 24px; flex: none; }
.weather-text { display: flex; flex-direction: column; margin-left: 9px; font-size: 14.500px; line-height: 21px; color: #1b1b1b; }
.weather-sub { color: #5a5a5a; }
.win-logo { width: 56px; display: flex; justify-content: center; flex: none; }
.tk { width: 30px; height: 30px; flex: none; }
.tk-search { width: 123px; height: 38px; border-radius: 19px; background: #f5f8fd; margin-left: 5px; margin-right: 5px; display: flex; align-items: center; justify-content: center; font-size: 15px; color: #1b1b1b; flex: none; }
.tk-search-ic { width: 18px; height: 18px; margin-right: 4px; }
.tk-apps { display: flex; flex: none; }
.tk-slot { width: 55px; height: 50px; display: flex; align-items: center; justify-content: center; position: relative; flex: none; padding-bottom: 4px; }
.tk-on::after { content: ""; position: absolute; left: 50%; bottom: 0; width: 6px; height: 6px; margin-left: -3px; border-radius: 50%; background: #7e8389; }
.tk-active-edge { background: #f8e3e6; border-radius: 5px; width: 49px; margin: 0 3px; }
.tk-active-edge::after { background: #c42b1c; }
.tk-active-snip { background: #eef1f8; border-radius: 5px; width: 49px; margin: 0 3px; box-shadow: 0 0 1px rgba(0,0,0,.2); }
.tk-active-snip::after { background: #0067c0; width: 18px; height: 4px; margin-left: -9px; border-radius: 2px; }
.chrome-badge { position: absolute; top: 2px; left: 33px; width: 19px; height: 19px; border-radius: 50%; background: #0b57a4; color: #fff; font-size: 11px; text-align: center; line-height: 19px; }
.tk-txt { font: 700 11px "Liberation Sans", sans-serif; fill: #fff; }
.tk-txt-w { font-size: 13px; }
.tray { margin-left: auto; display: flex; align-items: center; padding-right: 22px; }
.tr { width: 20px; height: 20px; flex: none; margin-right: 11px; display: block; }
.tr-drive { margin-right: 9px; }
.tr-sync { margin-right: 14px; }
.tr-wrap { position: relative; display: block; }
.tr-err { position: absolute; right: 6px; bottom: -2px; width: 12px; height: 12px; border-radius: 50%; background: #d13438; color: #fff; font-size: 11px; line-height: 11px; text-align: center; }
.clock { display: flex; flex-direction: column; align-items: flex-end; font-size: 13.600px; line-height: 21px; color: #1b1b1b; margin-left: 8px; width: 65px; white-space: nowrap; }
.notif { width: 22px; height: 22px; border-radius: 50%; background: #0067c0; color: #fff; font-size: 13px; text-align: center; line-height: 22px; margin-left: 7px; }
```
